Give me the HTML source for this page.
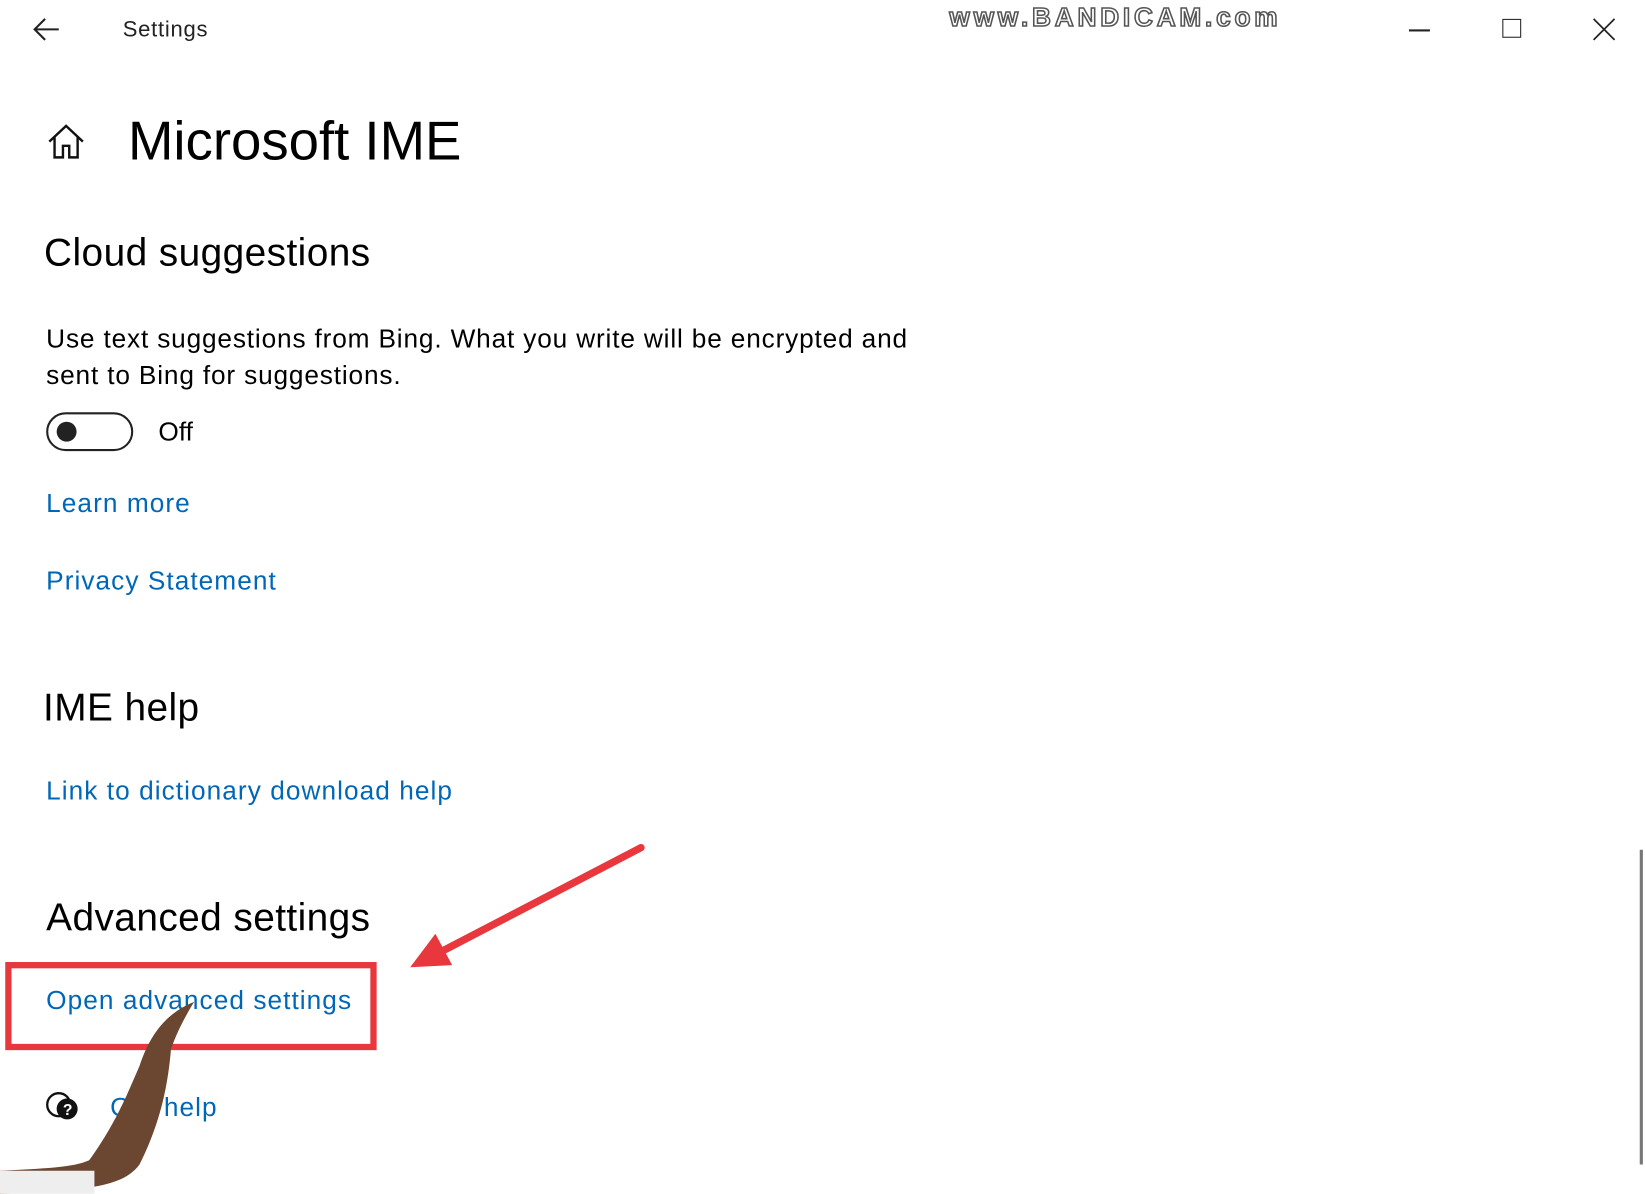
<!DOCTYPE html>
<html><head><meta charset="utf-8"><style>
html,body{margin:0;padding:0;background:#fff;overflow:hidden;width:1645px;height:1194px}
#w{position:absolute;left:0;top:0;width:1568px;height:1138px;transform:scale(1.0491);transform-origin:0 0;font-family:"Liberation Sans",sans-serif;color:#000}
.t{position:absolute;white-space:nowrap;line-height:1}
.l{color:#0067b8;font-size:25px;letter-spacing:1px}
.h2{font-size:37px;letter-spacing:0.4px}
</style></head><body><div id="w">
<svg style="position:absolute;left:30px;top:15px" width="28" height="26" viewBox="0 0 28 26"><path d="M26 13H4M13 3L3 13l10 10" fill="none" stroke="#222" stroke-width="2"/></svg>
<div class="t" style="left:117px;top:18px;font-size:21px;color:#222;letter-spacing:0.7px">Settings</div>
<div class="t" style="left:905px;top:5px;font-size:25px;font-weight:bold;color:#fff;-webkit-text-stroke:1.5px #555;letter-spacing:3.6px">www.BANDICAM.com</div>
<div style="position:absolute;left:1343px;top:28px;width:20px;height:1.5px;background:#222"></div>
<div style="position:absolute;left:1432px;top:18px;width:16px;height:16px;border:1.5px solid #222"></div>
<svg style="position:absolute;left:1518px;top:17px" width="22" height="22"><path d="M1 1L21 21M21 1L1 21" stroke="#222" stroke-width="1.6"/></svg>
<svg style="position:absolute;left:44px;top:117px" width="38" height="36" viewBox="0 0 38 36"><path d="M3 18L19 3l16 15M8 14v19h8V22h6v11h8V14" fill="none" stroke="#111" stroke-width="2.3"/></svg>
<div class="t" style="left:122px;top:109px;font-size:52px">Microsoft IME</div>
<div class="t h2" style="left:42px;top:222px">Cloud suggestions</div>
<div class="t" style="left:44px;top:306px;font-size:25px;line-height:35px;letter-spacing:0.8px">Use text suggestions from Bing. What you write will be encrypted and<br>sent to Bing for suggestions.</div>
<div style="position:absolute;left:44px;top:393px;width:79px;height:33px;border:2.5px solid #222;border-radius:20px"></div>
<div style="position:absolute;left:54px;top:402px;width:19px;height:19px;border-radius:50%;background:#222"></div>
<div class="t" style="left:151px;top:400px;font-size:25px">Off</div>
<div class="t l" style="left:44px;top:468px">Learn more</div>
<div class="t l" style="left:44px;top:542px">Privacy Statement</div>
<div class="t h2" style="left:41px;top:656px">IME help</div>
<div class="t l" style="left:44px;top:742px">Link to dictionary download help</div>
<div class="t h2" style="left:44px;top:856px">Advanced settings</div>
<div class="t l" style="left:44px;top:942px">Open advanced settings</div>
<div style="position:absolute;left:5px;top:917px;width:342px;height:72px;border:6px solid #e8383d"></div>
<svg style="position:absolute;left:42px;top:1040px" width="36" height="32" viewBox="0 0 36 32"><circle cx="14" cy="13" r="11" fill="none" stroke="#111" stroke-width="2.2"/><circle cx="22" cy="17" r="10" fill="#111"/><text x="18" y="23" font-size="15" font-weight="bold" fill="#fff" font-family="Liberation Sans">?</text></svg>
<div class="t l" style="left:105px;top:1044px">Get help</div>
<svg style="position:absolute;left:0;top:950px" width="200" height="188"><path d="M185 5c-6 10-15 25-22 45-3 35-10 70-30 110-15 20-45 25-133 28v-22c40-2 70-3 85-10 25-35 35-60 48-90 10-30 25-50 52-61z" fill="#6b4630"/><path d="M0 166h90v22H0z" fill="#eee"/></svg>
<svg style="position:absolute;left:385px;top:800px" width="235" height="130"><path d="M226 8L30 110" stroke="#e8383d" stroke-width="7" stroke-linecap="round"/><path d="M6 122L30 90l16 30z" fill="#e8383d"/></svg>
<div style="position:absolute;left:1563px;top:810px;width:3px;height:300px;background:#777"></div>
</div></body></html>
